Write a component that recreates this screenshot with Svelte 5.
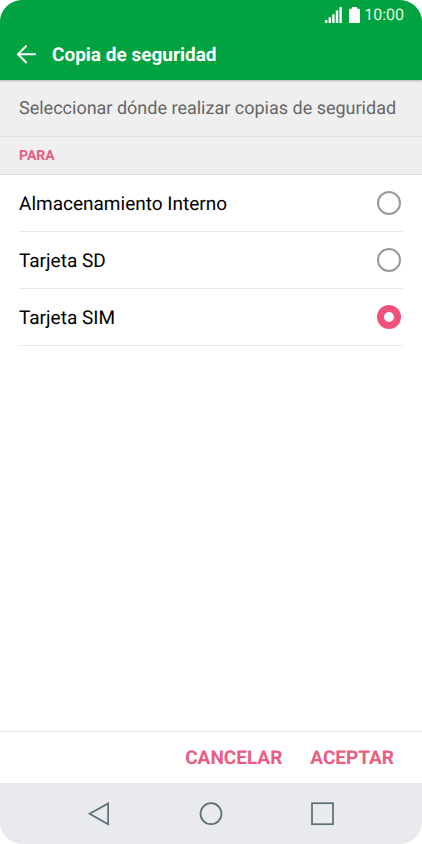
<script>
  const options = [
    { value: 'internal', label: 'Almacenamiento Interno' },
    { value: 'sd', label: 'Tarjeta SD' },
    { value: 'sim', label: 'Tarjeta SIM' }
  ]

  let selected = $state('sim')
</script>

<div class="phone">
  <header>
    <div class="status-bar">
      <svg class="signal" width="17" height="17" viewBox="0 0 17 17" fill="currentColor">
        <path d="M0 13h2.4v3H0zM3.6 10.2H6V16H3.6zM7.2 7.2h2.4V16H7.2zM10.8 3.6h2.4V16h-2.4zM14.4 0h2.4v16h-2.4z" />
      </svg>
      <svg class="battery" width="11" height="17" viewBox="0 0 11 17" fill="currentColor">
        <path d="M3 0h5v1.7h2.2a.8.8 0 0 1 .8.8v12.7a.8.8 0 0 1-.8.8H.8a.8.8 0 0 1-.8-.8V2.5a.8.8 0 0 1 .8-.8H3z" />
      </svg>
      <span class="time">10:00</span>
    </div>
    <div class="title-bar">
      <button class="back" aria-label="Atrás">
        <svg width="20" height="20" viewBox="0 0 20 20" fill="none" stroke="currentColor" stroke-width="2">
          <path d="M19.8 9.3H2M10.6 0.6L2 9.3l8.6 8.7" />
        </svg>
      </button>
      <h1>Copia de seguridad</h1>
    </div>
  </header>

  <main>
    <p class="description">Seleccionar dónde realizar copias de seguridad</p>
    <h2 id="target-heading">PARA</h2>
    <div class="options" role="radiogroup" aria-labelledby="target-heading">
      {#each options as option}
        <label class="option">
          <span>{option.label}</span>
          <input type="radio" name="target" value={option.value} bind:group={selected} />
        </label>
      {/each}
    </div>
  </main>

  <div class="actions">
    <button>CANCELAR</button>
    <button>ACEPTAR</button>
  </div>

  <nav>
    <button aria-label="Volver">
      <svg width="24" height="24" viewBox="0 0 24 24">
        <path d="M21.1 1.4v20.8L2.6 11.8z" />
      </svg>
    </button>
    <button aria-label="Inicio">
      <svg width="24" height="24" viewBox="0 0 24 24">
        <circle cx="12" cy="11.7" r="10.5" />
      </svg>
    </button>
    <button aria-label="Recientes">
      <svg width="24" height="24" viewBox="0 0 24 24">
        <rect x="1" y="1.2" width="21" height="21" />
      </svg>
    </button>
  </nav>
</div>

<style>
  :global(body) {
    margin: 0;
    background: #fff;
  }

  .phone {
    display: flex;
    flex-direction: column;
    min-height: 100vh;
    border-radius: 22px;
    overflow: hidden;
    background: #fff;
    color: #000;
    font-family: Roboto, 'Liberation Sans', sans-serif;
    text-rendering: geometricPrecision;
  }

  button {
    padding: 0;
    border: 0;
    background: none;
    color: inherit;
    font: inherit;
    text-rendering: inherit;
    cursor: pointer;
  }

  svg {
    display: block;
  }

  header {
    background: #00a33f;
    color: #fff;
    box-shadow: 0 1px 2px rgba(0, 0, 0, 0.25);
    z-index: 1;
  }

  .status-bar {
    display: flex;
    align-items: center;
    justify-content: flex-end;
    height: 30px;
    padding: 0 18px;
  }

  .battery {
    margin: 0 4px 0 7px;
  }

  .time {
    font-size: 16px;
    line-height: 20px;
    color: #e0f7e6;
  }

  .title-bar {
    display: flex;
    align-items: center;
    gap: 16px;
    height: 50px;
    padding: 0 16px;
  }

  .back {
    width: 20px;
  }

  h1 {
    margin: 0;
    font-size: 19px;
    font-weight: 700;
    line-height: 24px;
  }

  main {
    flex: 1;
  }

  .description {
    margin: 0;
    padding: 17px 19px 15px;
    border-bottom: 1px solid #e0e0e0;
    background: #efefef;
    color: #666;
    font-size: 18px;
    line-height: 24px;
  }

  h2 {
    margin: 0;
    padding: 10px 19px 8px;
    border-bottom: 1px solid #e0e0e0;
    background: #efefef;
    color: #e95d82;
    font-size: 14px;
    font-weight: 700;
    line-height: 19px;
  }

  .options {
    padding: 0 19px;
  }

  .option {
    display: flex;
    align-items: center;
    justify-content: space-between;
    height: 56px;
    padding-right: 2px;
    border-bottom: 1px solid #e8e8e8;
    font-size: 19px;
    line-height: 24px;
    cursor: pointer;
  }

  .option span {
    padding-top: 2px;
  }

  .option input {
    appearance: none;
    width: 24px;
    height: 24px;
    margin: 0;
    border: 2px solid #999;
    border-radius: 50%;
    background: #fff;
  }

  .option input:checked {
    border: 7px solid #f0527b;
  }

  .actions {
    display: flex;
    justify-content: flex-end;
    gap: 28px;
    padding: 14px 28px 13px;
    border-top: 1px solid #e8e8e8;
    color: #e95d82;
    font-size: 19px;
    font-weight: 700;
    line-height: 24px;
  }

  nav {
    display: flex;
    align-items: center;
    justify-content: center;
    gap: 88px;
    height: 61px;
    background: #e8eaee;
  }

  nav svg {
    fill: none;
    stroke: #5b6e78;
    stroke-width: 1.7;
  }
</style>
